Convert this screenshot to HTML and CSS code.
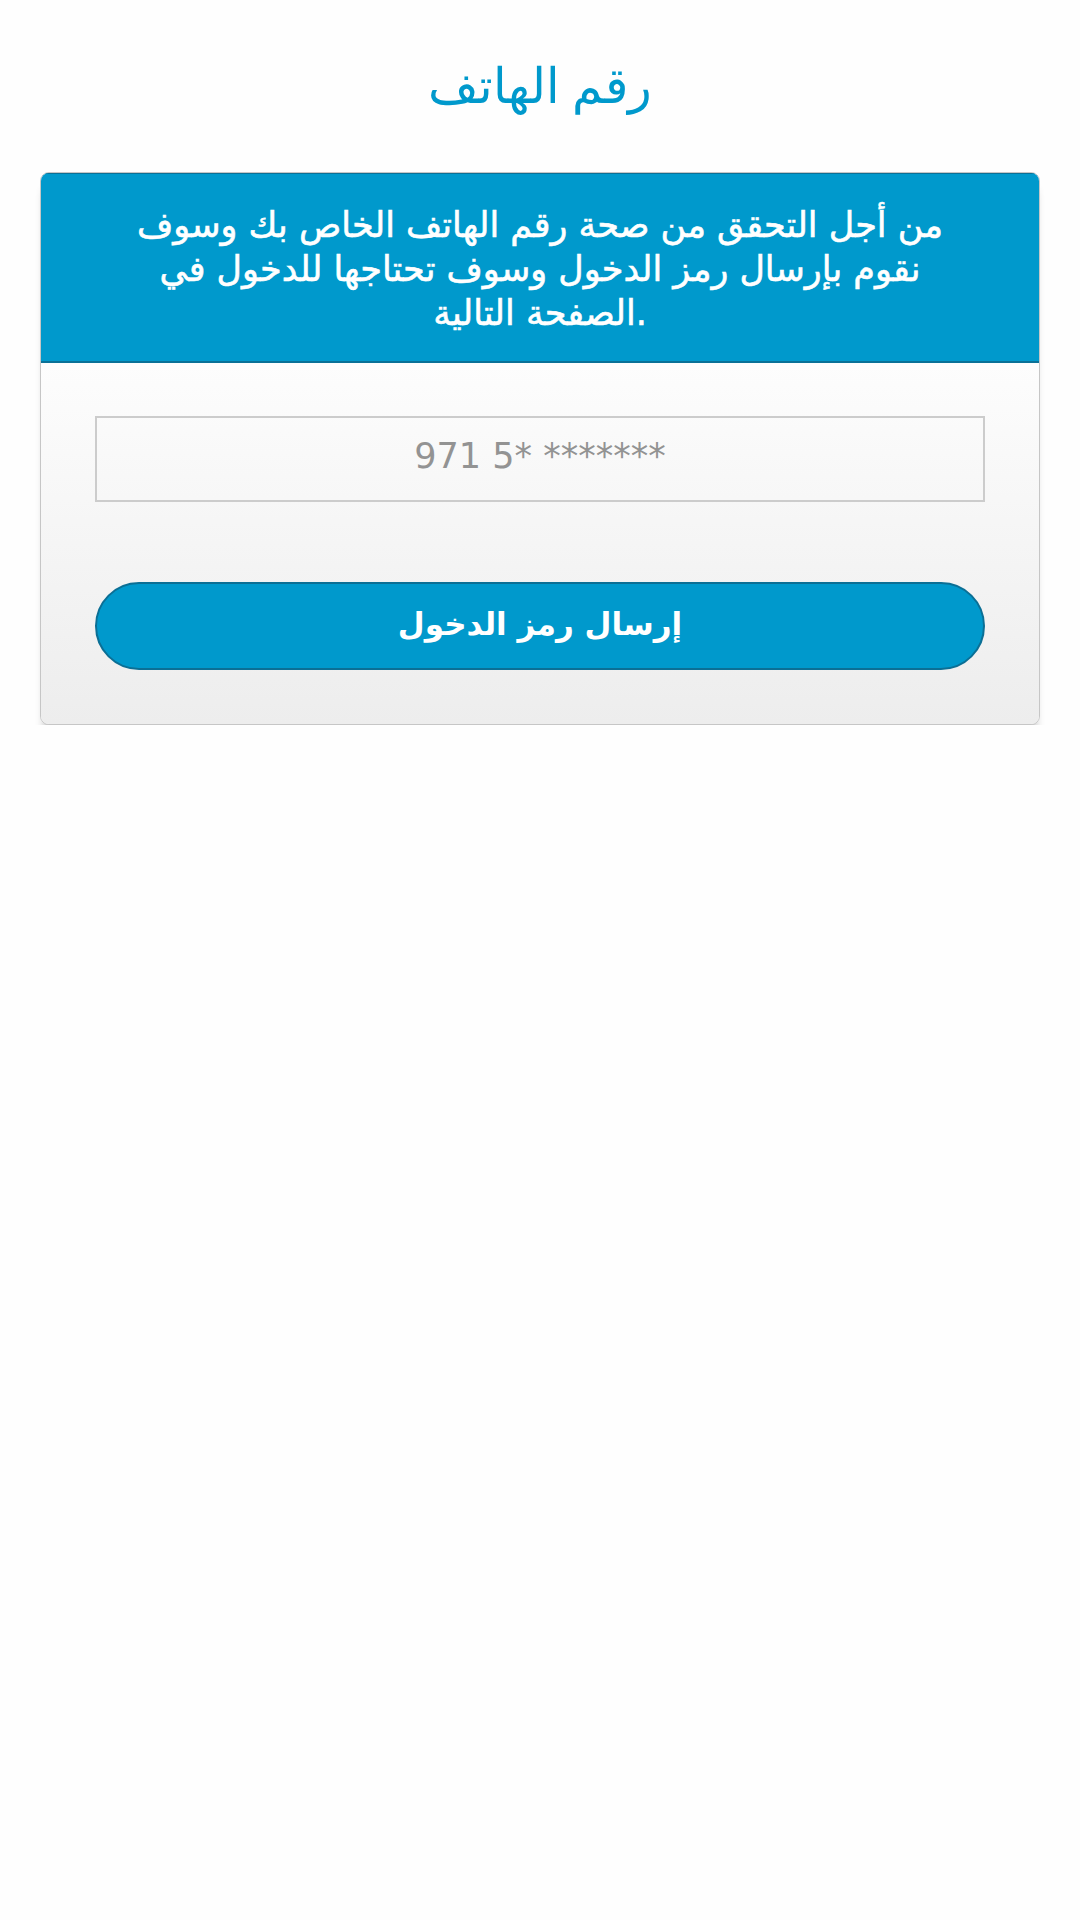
FILE: index.html
```html
<!DOCTYPE html>
<html lang="ar">
<head>
<meta charset="utf-8">
<title>رقم الهاتف</title>
<link rel="stylesheet" href="styles.css">
</head>
<body>
<div class="page">
  <h1 class="title">رقم الهاتف</h1>
  <div class="card">
    <div class="card-head">
      <p class="intro">من أجل التحقق من صحة رقم الهاتف الخاص بك وسوف<br>نقوم بإرسال رمز الدخول وسوف تحتاجها للدخول في<br>الصفحة التالية.</p>
    </div>
    <div class="card-body">
      <input class="phone" type="text" placeholder="971 5* *******">
      <button class="send" type="button">إرسال رمز الدخول</button>
    </div>
  </div>
</div>
</body>
</html>
```
FILE: styles.css
```css
html, body {
  margin: 0;
  padding: 0;
  background: #fefefe;
}
body {
  font-family: "DejaVu Sans", "Noto Sans", sans-serif;
}
.page {
  padding: 0 40px;
}
.title {
  margin: 0;
  height: 172px;
  display: flex;
  align-items: center;
  justify-content: center;
  font-family: "Liberation Serif", "DejaVu Serif", serif;
  font-weight: normal;
  font-size: 49px;
  color: #0099cc;
}
.card {
  border: 1px solid #c6c6c6;
  border-radius: 9px;
  background: #fdfdfd;
  box-shadow: 0 13px 10px -5px rgba(0, 0, 0, 0.3);
  overflow: hidden;
}
.card-head {
  background: #0099cc;
  border-bottom: 2px solid #0b7197;
  box-shadow: inset 0 1px 0 #0b7197;
  padding: 30px 30px 26px;
}
.intro {
  margin: 0;
  color: #ffffff;
  text-align: center;
  font-size: 35px;
  line-height: 44px;
  font-weight: normal;
  -webkit-text-stroke: 0.6px #ffffff;
}
.card-body {
  display: flex;
  flex-direction: column;
  gap: 80px;
  padding: 53px 54px 54px;
  background: linear-gradient(#fdfdfd, #ededed);
}
.phone {
  box-sizing: border-box;
  height: 86px;
  width: 100%;
  border: 2px solid #cccccc;
  background: transparent;
  text-align: center;
  font-family: "DejaVu Sans", sans-serif;
  font-size: 35px;
  color: #999999;
  outline: none;
  padding: 0 10px 6px;
}
.phone::placeholder {
  color: #939393;
}
.send {
  box-sizing: border-box;
  height: 88px;
  width: 100%;
  border: 2px solid #0b6f95;
  border-radius: 44px;
  background: #0099cc;
  color: #ffffff;
  font-family: "DejaVu Sans", sans-serif;
  font-weight: bold;
  font-size: 31px;
  padding: 0 0 4px;
  cursor: pointer;
}
```
